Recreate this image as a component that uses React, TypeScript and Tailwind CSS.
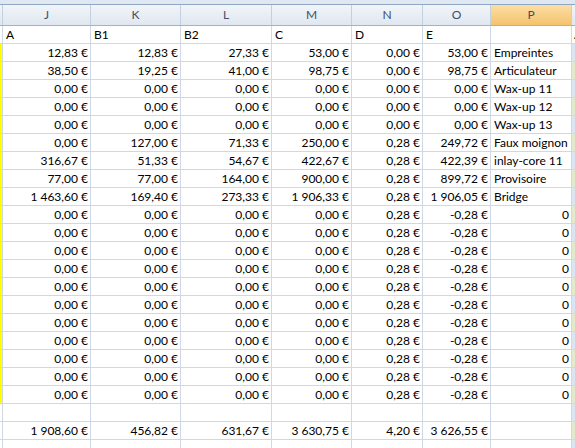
const cols = [
  { key: "I", w: "w-[3px]" },
  { key: "J", w: "w-[88px]" },
  { key: "K", w: "w-[90px]" },
  { key: "L", w: "w-[91px]" },
  { key: "M", w: "w-[80px]" },
  { key: "N", w: "w-[71px]" },
  { key: "O", w: "w-[68px]" },
  { key: "P", w: "w-[81px]" },
];

const z = "0,00 €";

// J K L M N O, P label
const data: [string, string, string, string, string, string, string][] = [
  ["12,83 €", "12,83 €", "27,33 €", "53,00 €", z, "53,00 €", "Empreintes"],
  ["38,50 €", "19,25 €", "41,00 €", "98,75 €", z, "98,75 €", "Articulateur"],
  [z, z, z, z, z, z, "Wax-up 11"],
  [z, z, z, z, z, z, "Wax-up 12"],
  [z, z, z, z, z, z, "Wax-up 13"],
  [z, "127,00 €", "71,33 €", "250,00 €", "0,28 €", "249,72 €", "Faux moignon"],
  ["316,67 €", "51,33 €", "54,67 €", "422,67 €", "0,28 €", "422,39 €", "inlay-core 11"],
  ["77,00 €", "77,00 €", "164,00 €", "900,00 €", "0,28 €", "899,72 €", "Provisoire"],
  ["1 463,60 €", "169,40 €", "273,33 €", "1 906,33 €", "0,28 €", "1 906,05 €", "Bridge"],
];

const zeroRows = Array.from({ length: 11 }, () => [z, z, z, z, "0,28 €", "-0,28 €", "0"]);

const Cell = ({ w, children, right, fill }: { w: string; children?: React.ReactNode; right?: boolean; fill?: string }) => (
  <div
    className={`${w} shrink-0 h-full border-r border-[#d0d7e5] overflow-hidden whitespace-nowrap flex items-center ${
      right ? "justify-end pr-[2px]" : "pl-[3px]"
    } ${fill ?? ""}`}
  >
    {children}
  </div>
);

const Row = ({ values, yellow, qFill, alignP }: { values: string[]; yellow?: boolean; qFill: string; alignP?: boolean }) => (
  <div className="flex h-[18px] border-b border-[#d0d7e5]">
    <div className={`w-[3px] shrink-0 h-full border-r border-[#d0d7e5] ${yellow ? "bg-[#ffff00]" : ""}`} />
    <Cell w="w-[88px]" right>{values[0]}</Cell>
    <Cell w="w-[90px]" right>{values[1]}</Cell>
    <Cell w="w-[91px]" right>{values[2]}</Cell>
    <Cell w="w-[80px]" right>{values[3]}</Cell>
    <Cell w="w-[71px]" right>{values[4]}</Cell>
    <Cell w="w-[68px]" right>{values[5]}</Cell>
    <Cell w="w-[81px]" right={alignP}>{values[6]}</Cell>
    <div className={`flex-1 h-full ${qFill}`} />
  </div>
);

export default function App() {
  const blue = "bg-[#dae5f1]";
  const green = "bg-[#e2eacb]";
  return (
    <div
      className="w-[575px] h-[448px] overflow-hidden bg-white text-black text-[12px]"
      style={{ fontFamily: "Lato, 'Open Sans', sans-serif" }}
    >
      <div className="h-[5px] bg-[#dfe7f1] border-b border-[#8fa7c5]" />
      <div className="flex h-[21px] border-b border-[#9eb3cc]">
        {cols.map((c) => (
          <div
            key={c.key}
            className={`${c.w} shrink-0 h-full border-r border-[#c3d0df] flex items-center justify-center text-[#3e5068] ${
              c.key === "P"
                ? "bg-gradient-to-b from-[#fbdea4] to-[#f4c36c]"
                : "bg-gradient-to-b from-[#f1f5f9] to-[#e0e7f0]"
            }`}
          >
            {c.key === "I" ? "" : c.key}
          </div>
        ))}
        <div className="flex-1 h-full bg-gradient-to-b from-[#f1f5f9] to-[#e0e7f0]" />
      </div>

      <div className="flex h-[18px] border-b border-[#d0d7e5]">
        <div className="w-[3px] shrink-0 h-full border-r border-[#d0d7e5]" />
        <Cell w="w-[88px]">A</Cell>
        <Cell w="w-[90px]">B1</Cell>
        <Cell w="w-[91px]">B2</Cell>
        <Cell w="w-[80px]">C</Cell>
        <Cell w="w-[71px]">D</Cell>
        <Cell w="w-[68px]">E</Cell>
        <Cell w="w-[81px]" />
        <div className="flex-1 h-full pl-[2px] flex items-center overflow-hidden">A</div>
      </div>

      {data.map((r, i) => (
        <Row key={`d${i}`} values={r} yellow qFill={i % 2 === 0 ? blue : green} />
      ))}
      {zeroRows.map((r, i) => (
        <Row key={`z${i}`} values={r} yellow alignP qFill={(i + 9) % 2 === 0 ? blue : green} />
      ))}
      <Row values={["", "", "", "", "", "", ""]} qFill={blue} />
      <Row values={["1 908,60 €", "456,82 €", "631,67 €", "3 630,75 €", "4,20 €", "3 626,55 €", ""]} qFill={green} />
      <Row values={["", "", "", "", "", "", ""]} qFill={blue} />
    </div>
  );
}
